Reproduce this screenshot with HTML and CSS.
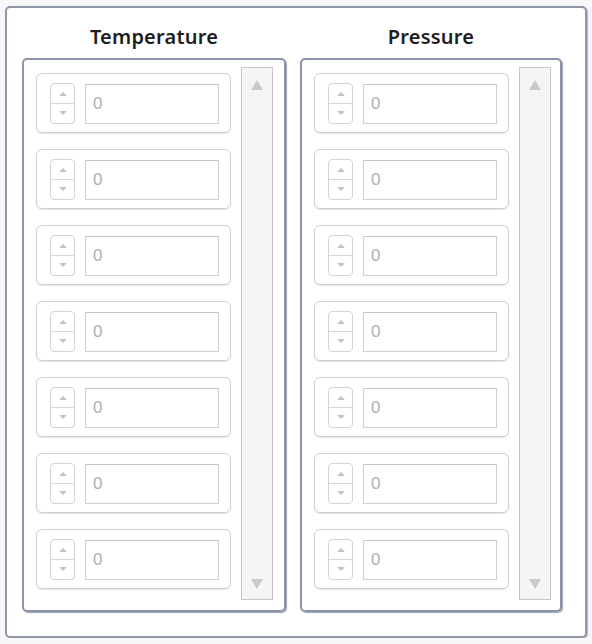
FILE: index.html
```html
<!DOCTYPE html>
<html lang="en">
<head>
<meta charset="UTF-8">
<title>Sensor Values</title>
<link rel="stylesheet" href="styles.css">
</head>
<body>

<div class="panel">

  <div class="column">
    <h2 class="title">Temperature</h2>
    <div class="group">
      <div class="list">
        <div class="item"><div class="spin"><span class="up"></span><span class="down"></span></div><div class="field">0</div></div>
        <div class="item"><div class="spin"><span class="up"></span><span class="down"></span></div><div class="field">0</div></div>
        <div class="item"><div class="spin"><span class="up"></span><span class="down"></span></div><div class="field">0</div></div>
        <div class="item"><div class="spin"><span class="up"></span><span class="down"></span></div><div class="field">0</div></div>
        <div class="item"><div class="spin"><span class="up"></span><span class="down"></span></div><div class="field">0</div></div>
        <div class="item"><div class="spin"><span class="up"></span><span class="down"></span></div><div class="field">0</div></div>
        <div class="item"><div class="spin"><span class="up"></span><span class="down"></span></div><div class="field">0</div></div>
      </div>
      <div class="scrollbar"><span class="arrow-up"></span><span class="arrow-down"></span></div>
    </div>
  </div>

  <div class="column right">
    <h2 class="title">Pressure</h2>
    <div class="group">
      <div class="list">
        <div class="item"><div class="spin"><span class="up"></span><span class="down"></span></div><div class="field">0</div></div>
        <div class="item"><div class="spin"><span class="up"></span><span class="down"></span></div><div class="field">0</div></div>
        <div class="item"><div class="spin"><span class="up"></span><span class="down"></span></div><div class="field">0</div></div>
        <div class="item"><div class="spin"><span class="up"></span><span class="down"></span></div><div class="field">0</div></div>
        <div class="item"><div class="spin"><span class="up"></span><span class="down"></span></div><div class="field">0</div></div>
        <div class="item"><div class="spin"><span class="up"></span><span class="down"></span></div><div class="field">0</div></div>
        <div class="item"><div class="spin"><span class="up"></span><span class="down"></span></div><div class="field">0</div></div>
      </div>
      <div class="scrollbar"><span class="arrow-up"></span><span class="arrow-down"></span></div>
    </div>
  </div>

</div>

</body>
</html>
```

FILE: styles.css
```css
* {
  box-sizing: border-box;
}
body {
  margin: 0;
  background-color: #f7f7f9;
  font-family: 'Noto Sans', 'Open Sans', sans-serif;
}
.panel {
  display: grid;
  grid-template-columns: 264px 262px;
  column-gap: 14px;
  width: 582px;
  height: 632px;
  margin: 6px 0 0 5px;
  padding: 0 23px 24px 15px;
  background-color: #fff;
  border: 2px solid #8f96a8;
  border-radius: 5px;
  box-shadow: 1px 1px 1px rgba(60, 70, 90, 0.35);
}
.column {
  display: flex;
  flex-direction: column;
}
.title {
  margin: 0 0 9px;
  padding-top: 17px;
  line-height: 24px;
  text-align: center;
  font-size: 20px;
  font-weight: 600;
  letter-spacing: 0.2px;
  color: #1e1e1e;
}
.group {
  display: flex;
  flex: 1;
  padding: 0 11px 0 12px;
  border: 2px solid #8a93aa;
  border-radius: 5px;
  box-shadow: 1px 1px 1px rgba(40, 50, 70, 0.45);
}
.right .group {
  padding-right: 9px;
}
.list {
  display: flex;
  flex-direction: column;
  gap: 16px;
  width: 195px;
  padding-top: 13px;
}
.item {
  display: flex;
  align-items: flex-start;
  gap: 10px;
  height: 60px;
  padding: 9px 11px 0 13px;
  border: 1px solid #cfcfcf;
  border-radius: 6px;
  box-shadow: 0 1px 1px rgba(0, 0, 0, 0.1);
}
.spin {
  display: flex;
  flex-direction: column;
  width: 25px;
  height: 41px;
  border: 1px solid #d4d4d4;
  border-radius: 4px;
}
.spin span {
  flex: 1;
  position: relative;
}
.spin .up {
  border-bottom: 1px solid #dadada;
}
.spin span::after {
  content: "";
  position: absolute;
  left: 8px;
  top: 8px;
  border-left: 4px solid transparent;
  border-right: 4px solid transparent;
}
.spin .up::after {
  border-bottom: 4px solid #c4c4c4;
}
.spin .down::after {
  top: 7px;
  border-top: 4px solid #c4c4c4;
}
.field {
  width: 134px;
  height: 40px;
  margin-top: 1px;
  padding-left: 7px;
  border: 1px solid #d0d0d0;
  border-top-color: #c6c6c6;
  line-height: 38px;
  font-size: 17px;
  color: #b0b0b0;
  font-family: 'Liberation Sans', sans-serif;
}
.scrollbar {
  display: flex;
  flex-direction: column;
  justify-content: space-between;
  align-items: center;
  width: 33px;
  margin: 7px 0 10px 10px;
  padding: 12px 0 10px;
  border: 1px solid #c6c6c6;
  background-color: #f5f5f5;
}
.right .scrollbar {
  width: 32px;
}
.arrow-up {
  border-left: 6px solid transparent;
  border-right: 6px solid transparent;
  border-bottom: 10px solid #c9c9c9;
}
.arrow-down {
  border-left: 6px solid transparent;
  border-right: 6px solid transparent;
  border-top: 10px solid #c9c9c9;
}
```
